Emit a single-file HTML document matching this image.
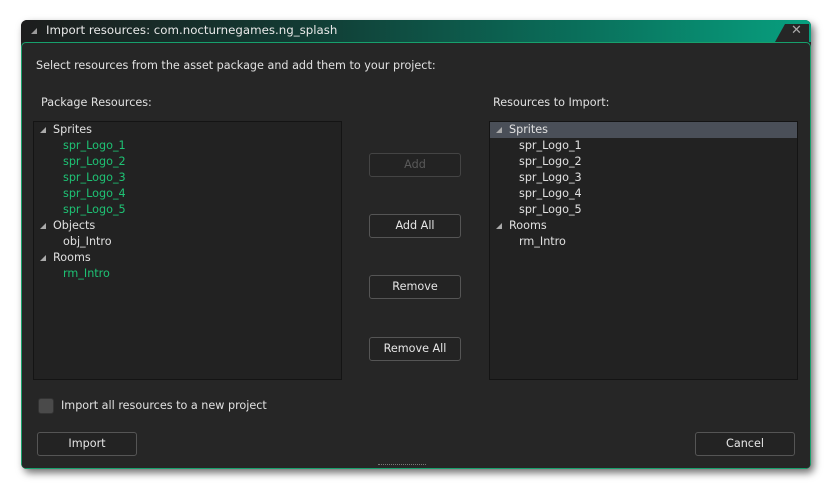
<!DOCTYPE html>
<html><head><style>
*{margin:0;padding:0;box-sizing:border-box}
body{width:832px;height:489px;background:#fff;position:relative;overflow:hidden;font-family:"DejaVu Sans","Liberation Sans",sans-serif;font-size:11.2px;color:#e0e0e0}
.win{position:absolute;left:21px;top:20px;width:790px;height:449px;border-radius:6px;background:#262626;box-shadow:3px 4px 8px rgba(0,0,0,.55);overflow:hidden}
.title{position:absolute;left:0;top:0;width:790px;height:22px;background:linear-gradient(90deg,#1d1d1d 0%,#123a33 35%,#0a6e5a 70%,#07a07f 100%);color:#e8e8e8}
.title span.tt{position:absolute;left:25px;top:3px;font-size:11.8px}
.tri{position:absolute;left:10px;top:8px;width:0;height:0;border-left:6px solid transparent;border-bottom:6px solid #9a9a9a}
.close{position:absolute;right:2px;top:4px;width:34px;height:18px;background:#262626;clip-path:polygon(10px 0,100% 0,100% 100%,0 100%)}
.x{position:absolute;left:770px;top:3px;font-size:13px;color:#aaa;font-family:"DejaVu Sans",sans-serif}
.body{position:absolute;left:0;top:22px;width:790px;height:427px;border:1px solid #17a06c;border-radius:5px 5px 4px 4px;background:#262626}
.t{position:absolute;white-space:nowrap}
.tree{position:absolute;top:121px;width:309px;height:259px;border:1px solid #141414;background:#222}
.row{height:16px;line-height:15px;position:relative;white-space:nowrap}
.row .a{position:absolute;left:6px;top:5px;width:0;height:0;border-left:6px solid transparent;border-bottom:6px solid #aaa}
.row.p{padding-left:19px}
.row.c{padding-left:29px}
.g{color:#1ec274}
.sel{background:#4a4f58}
.btn{position:absolute;width:92px;height:24px;border:1px solid #555;border-radius:3px;background:#232323;text-align:center;line-height:22px;color:#e6e6e6}
</style></head><body>
<div class="win">
<div class="title"><div class="tri"></div><span class="tt">Import resources: com.nocturnegames.ng_splash</span><div class="close"></div><span class="x">✕</span></div>
<div class="body"></div>
</div>
<div class="t" style="left:36px;top:59px">Select resources from the asset package and add them to your project:</div>
<div class="t" style="left:41px;top:96px">Package Resources:</div>
<div class="t" style="left:493px;top:96px">Resources to Import:</div>
<div class="tree" style="left:33px">
<div class="row p"><i class="a"></i>Sprites</div>
<div class="row c g">spr_Logo_1</div>
<div class="row c g">spr_Logo_2</div>
<div class="row c g">spr_Logo_3</div>
<div class="row c g">spr_Logo_4</div>
<div class="row c g">spr_Logo_5</div>
<div class="row p"><i class="a"></i>Objects</div>
<div class="row c">obj_Intro</div>
<div class="row p"><i class="a"></i>Rooms</div>
<div class="row c g">rm_Intro</div>
</div>
<div class="tree" style="left:489px">
<div class="row p sel"><i class="a"></i>Sprites</div>
<div class="row c">spr_Logo_1</div>
<div class="row c">spr_Logo_2</div>
<div class="row c">spr_Logo_3</div>
<div class="row c">spr_Logo_4</div>
<div class="row c">spr_Logo_5</div>
<div class="row p"><i class="a"></i>Rooms</div>
<div class="row c">rm_Intro</div>
</div>
<div class="btn" style="left:369px;top:153px;color:#5a5a5a;border-color:#444">Add</div>
<div class="btn" style="left:369px;top:214px">Add All</div>
<div class="btn" style="left:369px;top:275px">Remove</div>
<div class="btn" style="left:369px;top:337px">Remove All</div>
<div style="position:absolute;left:38px;top:398px;width:16px;height:16px;border-radius:3px;background:#4a4a4a;border:1px solid #333"></div>
<div class="t" style="left:61px;top:399px">Import all resources to a new project</div>
<div class="btn" style="left:37px;top:432px;width:100px">Import</div>
<div class="btn" style="left:695px;top:432px;width:100px">Cancel</div>
<div style="position:absolute;left:378px;top:464px;width:48px;height:2px;border-top:1px dotted #777"></div>
</body></html>
